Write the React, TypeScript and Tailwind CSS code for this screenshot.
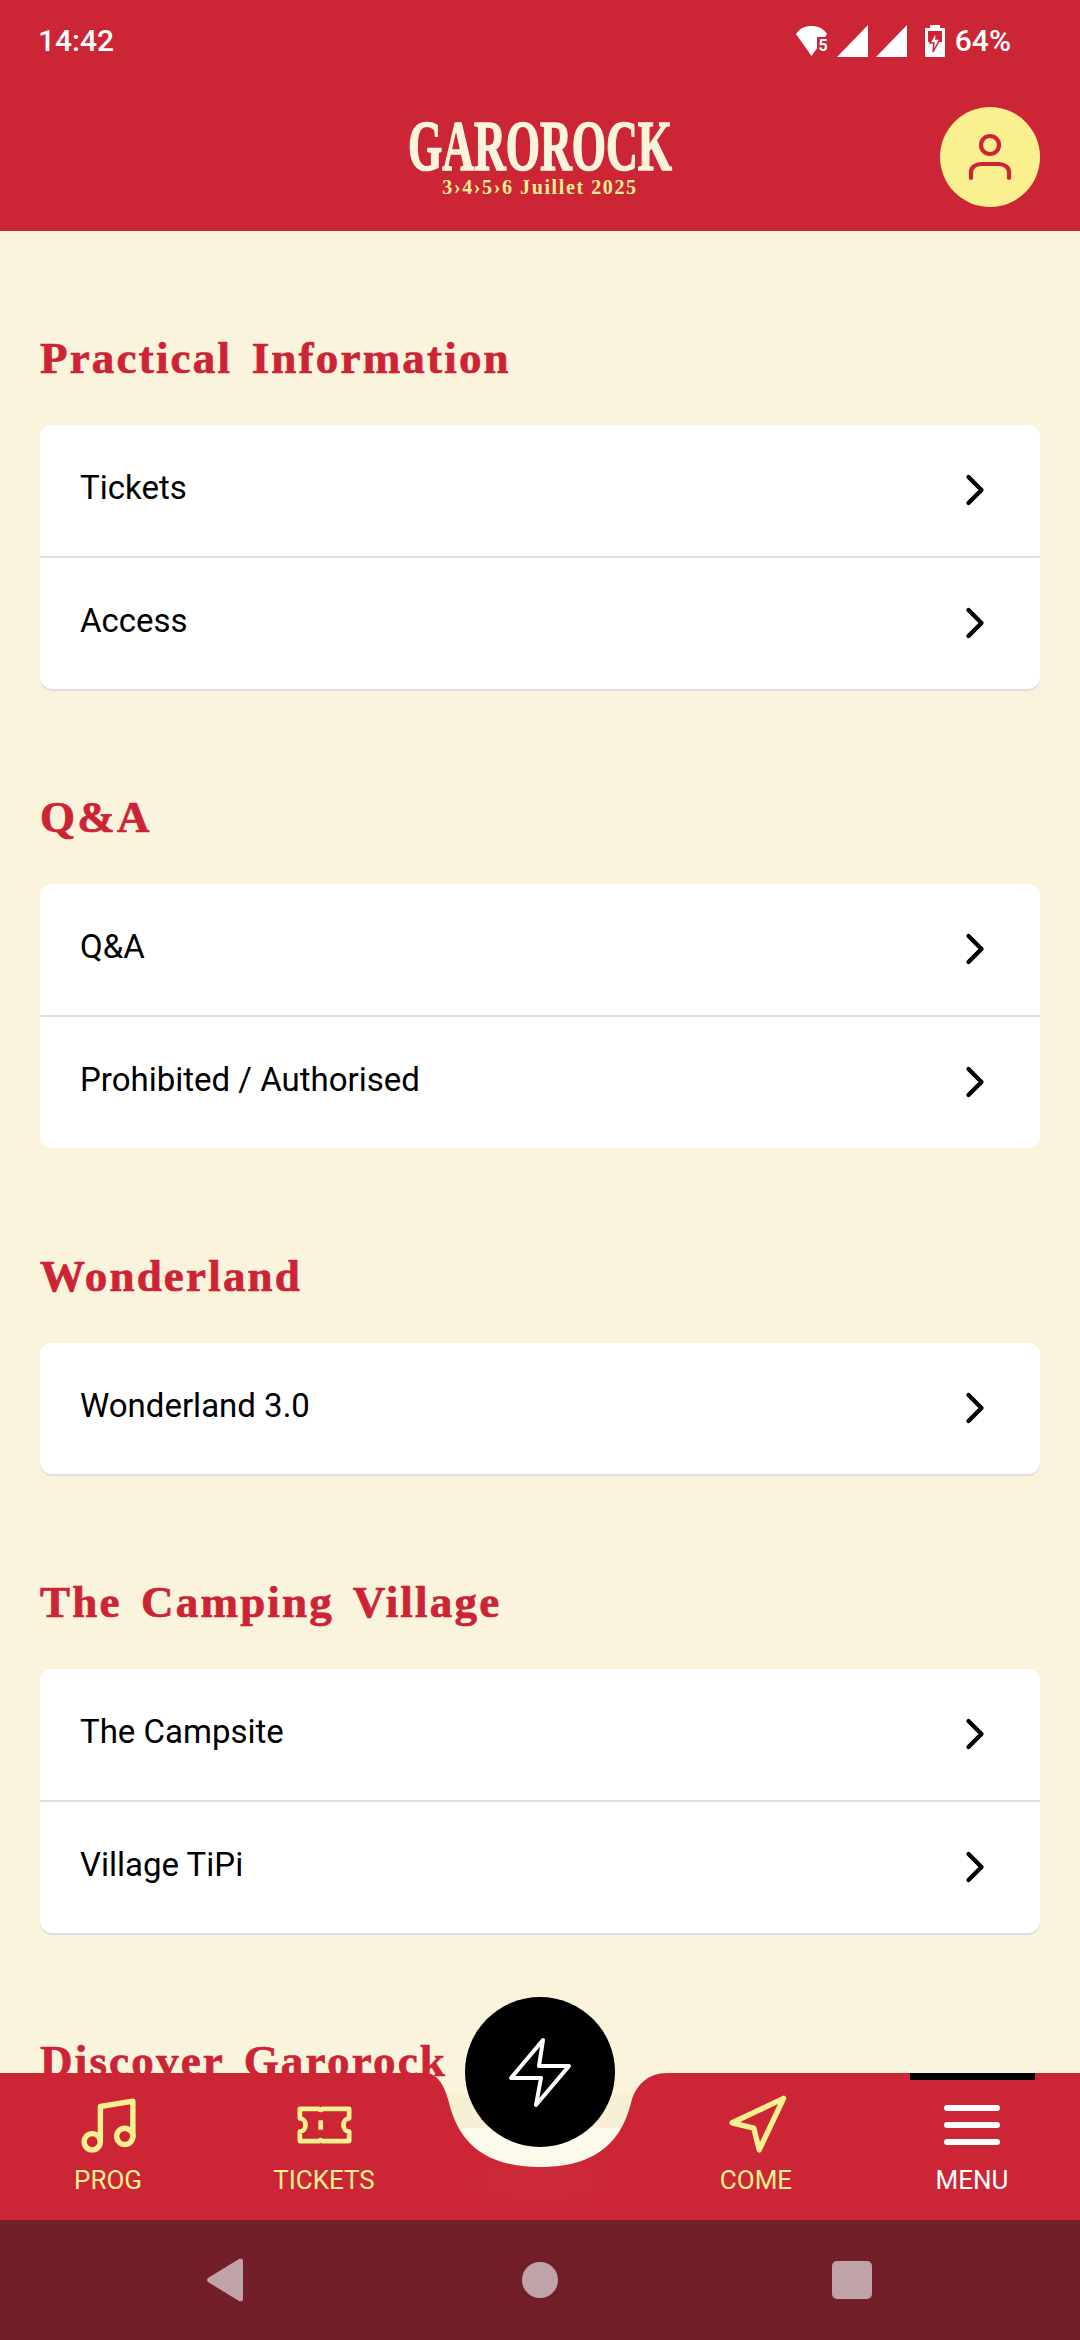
import { ChevronRight, Music, Navigation } from "lucide-react";

const sections = [
  { title: "Practical Information", rows: ["Tickets", "Access"], edge: true },
  { title: "Q&A", rows: ["Q&A", "Prohibited / Authorised"], edge: false },
  { title: "Wonderland", rows: ["Wonderland 3.0"], edge: true },
  { title: "The Camping Village", rows: ["The Campsite", "Village TiPi"], edge: true },
  // the rest of this list sits behind the bottom nav
  { title: "Discover Garorock", rows: [], edge: false },
];

function StatusBar() {
  return (
    <div className="flex h-[82px] items-center justify-between pl-[38px] pr-[69px] text-white font-['Roboto',sans-serif] font-medium">
      <span className="text-[30px] leading-none">14:42</span>
      <div className="flex items-center">
        <div className="relative h-[32px] w-[32px]">
          <svg width="32" height="32" viewBox="0 0 32 32">
            <path d="M0 9C4 3 9 1 15.500 1C22 1 27 3 31 9L15.500 31Z" fill="white" />
            <rect x="21" y="12" width="11" height="20" fill="#CC2636" />
          </svg>
          <span className="absolute right-0 top-[12px] text-[16px] font-bold leading-[18px]">5</span>
        </div>
        <svg className="ml-[9px]" width="32" height="32" viewBox="0 0 32 32">
          <path d="M0 32L31 0V32Z" fill="white" />
        </svg>
        <svg className="ml-[7px]" width="32" height="32" viewBox="0 0 32 32">
          <path d="M0 32L31 0V32Z" fill="white" />
        </svg>
        <svg className="ml-[17px]" width="20" height="32" viewBox="0 0 20 32">
          <path d="M5 0H15V3H19A1 1 0 0 1 20 4V31A1 1 0 0 1 19 32H1A1 1 0 0 1 0 31V4A1 1 0 0 1 1 3H5Z" fill="white" />
          <rect x="3" y="6" width="14" height="11" fill="#CC2636" />
          <path d="M11 7L5 18H9L8 27L15 14H11Z" fill="white" stroke="#CC2636" strokeWidth="1.500" />
        </svg>
        <span className="ml-[10px] text-[30px] leading-none">64%</span>
      </div>
    </div>
  );
}

function Header() {
  return (
    <header className="bg-[#CC2636]">
      <StatusBar />
      <div className="grid h-[149px] grid-cols-[1fr_auto_1fr] items-center px-[40px]">
        <div />
        <div className="mt-[3px] flex flex-col items-center font-['Liberation_Serif',serif] font-bold">
          <span className="my-[10px] scale-y-[1.65] text-[44px] leading-[30px] text-[#FBF4DD] [-webkit-text-stroke:1px_#FBF4DD]">
            GAROROCK
          </span>
          <span className="mt-[7px] text-[20px] leading-[16px] tracking-[1.6px] text-[#FAF08F]">
            3›4›5›6 Juillet 2025
          </span>
        </div>
        <button className="flex h-[100px] w-[100px] items-center justify-center justify-self-end rounded-full bg-[#FAF08F]">
          <svg width="44" height="48" viewBox="0 0 44 48" fill="none" stroke="#CC2636" strokeWidth="4.200" strokeLinecap="round">
            <circle cx="22" cy="12" r="9" />
            <path d="M3 45V39C3 34 8 31 13 31H31C36 31 41 34 41 39V45" />
          </svg>
        </button>
      </div>
    </header>
  );
}

function Section({ title, rows, edge }: { title: string; rows: string[]; edge: boolean }) {
  return (
    <section>
      <h2 className="mb-[37px] text-[45px] font-bold leading-[60px] tracking-[2.2px] text-[#CC2335] font-['Liberation_Serif',serif] [word-spacing:6px] [-webkit-text-stroke:0.7px_#CC2335]">
        {title}
      </h2>
      <div className={`overflow-hidden rounded-[12px] bg-white ${edge ? "shadow-[0_2px_1px_#dedede]" : ""}`}>
        {rows.map((row, i) => (
          <div
            key={row}
            className={`flex items-center justify-between pl-[40px] pr-[39px] ${
              i < rows.length - 1 ? "h-[133px] border-b-2 border-[#e0e0e0]" : "h-[131px]"
            }`}
          >
            <span className="pb-[5px] text-[33px] text-black font-['Roboto',sans-serif]">{row}</span>
            <ChevronRight size={52} strokeWidth={2} className="mb-[2px] text-black" />
          </div>
        ))}
      </div>
    </section>
  );
}

function TicketIcon() {
  return (
    <svg width="55" height="38" viewBox="0 0 58 40" fill="none" stroke="#FAF08F" strokeWidth="5" strokeLinejoin="round">
      <path d="M3 3H23A3 3 0 0 0 27 3H55V13A6 7 0 0 0 55 27V37H27A3 3 0 0 0 23 37H3V27A6 7 0 0 0 3 13Z" />
      <path d="M25 15V25" />
    </svg>
  );
}

function BottomNav() {
  const label = "mt-[4px] text-[26px] leading-[30px] font-['Roboto',sans-serif]";
  return (
    <nav className="absolute inset-x-0 bottom-[120px] h-[147px]">
      <svg className="absolute inset-0" width="1080" height="147" viewBox="0 0 1080 147">
        <rect x="440" y="20" width="200" height="36" fill="#F7F0D4" />
        <rect x="440" y="55" width="200" height="42" fill="#FCFAEA" />
        <path
          d="M0 0H425C437 0 444 12 448 26C456 60 475 94 540 94C605 94 624 60 632 26C637 12 648 0 667 0H1080V147H0Z"
          fill="#CC2636"
        />
      </svg>
      <div className="absolute left-[480px] top-[98px] h-[16px] w-[120px] rounded-full bg-white/5 blur-lg" />
      <div className="absolute right-[45px] top-0 h-[7px] w-[125px] bg-black" />
      <div className="absolute left-[465px] top-[-76px] flex h-[150px] w-[150px] items-center justify-center rounded-full bg-black">
        <svg width="64" height="70" viewBox="-2 -2 64 70" fill="none" stroke="white" strokeWidth="4" strokeLinejoin="round">
          <path d="M33 1L29 27H59L26 66L31 39H1Z" />
        </svg>
      </div>
      <div className="relative grid h-full grid-cols-5 pt-[16px] text-[#FAF08F]">
        <div className="flex flex-col items-center">
          <div className="flex h-[72px] items-center">
            <Music size={65} strokeWidth={2} />
          </div>
          <span className={label}>PROG</span>
        </div>
        <div className="flex flex-col items-center">
          <div className="flex h-[72px] items-center">
            <TicketIcon />
          </div>
          <span className={label}>TICKETS</span>
        </div>
        <div />
        <div className="flex flex-col items-center">
          <div className="flex h-[72px] items-center">
            <Navigation size={65} strokeWidth={2} />
          </div>
          <span className={label}>COME</span>
        </div>
        <div className="flex flex-col items-center text-white">
          <div className="flex h-[72px] items-center">
            <svg width="56" height="40" viewBox="0 0 56 40" stroke="white" strokeWidth="6" strokeLinecap="round">
              <path d="M3 3H53M3 20H53M3 37H53" />
            </svg>
          </div>
          <span className={label}>MENU</span>
        </div>
      </div>
    </nav>
  );
}

function SystemNav() {
  return (
    <div className="flex h-[120px] shrink-0 items-center pl-[207px] bg-[#721F29]">
      <svg width="36" height="44" viewBox="0 0 36 44">
        <path d="M32 1L1 20Q-1 22 1 24L32 43Q36 44 36 41V3Q36 0 32 1Z" fill="#C0A2A9" />
      </svg>
      <div className="ml-[279px] h-[36px] w-[36px] rounded-full bg-[#C0A2A9]" />
      <div className="ml-[274px] h-[38px] w-[40px] rounded-[5px] bg-[#C0A2A9]" />
    </div>
  );
}

export default function App() {
  return (
    <div className="relative flex h-[2340px] w-[1080px] flex-col overflow-hidden bg-[#FBF4DD]">
      <Header />
      <main className="flex min-h-0 flex-1 flex-col gap-[98px] overflow-hidden px-[40px] pt-[97px]">
        {sections.map((s) => (
          <Section key={s.title} title={s.title} rows={s.rows} edge={s.edge} />
        ))}
      </main>
      <BottomNav />
      <SystemNav />
    </div>
  );
}
